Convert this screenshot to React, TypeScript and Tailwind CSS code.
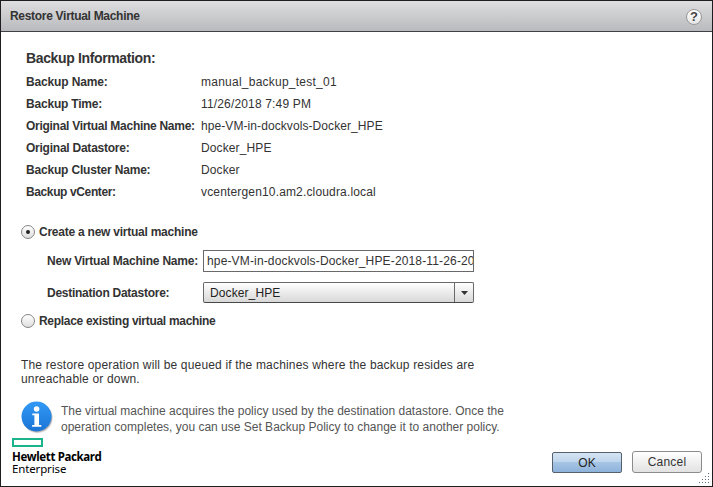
const details = [
  { label: "Backup Name:", value: "manual_backup_test_01", l: "tracking-[-0.15px]", v: "tracking-[0.24px]" },
  { label: "Backup Time:", value: "11/26/2018 7:49 PM", l: "tracking-[-0.2px]", v: "tracking-[0.16px]" },
  { label: "Original Virtual Machine Name:", value: "hpe-VM-in-dockvols-Docker_HPE", l: "tracking-[-0.28px]", v: "tracking-[0.08px]" },
  { label: "Original Datastore:", value: "Docker_HPE", l: "tracking-[-0.24px]", v: "tracking-[0.12px]" },
  { label: "Backup Cluster Name:", value: "Docker", l: "tracking-[-0.18px]", v: "tracking-[0.1px]" },
  { label: "Backup vCenter:", value: "vcentergen10.am2.cloudra.local", l: "tracking-[-0.38px]", v: "tracking-[0.16px]" },
];

function Radio({ checked }: { checked?: boolean }) {
  return (
    <span className="flex size-[14px] shrink-0 items-center justify-center rounded-full border border-[#858585] bg-linear-to-b from-white to-[#dedede]">
      {checked && <span className="size-[4px] rounded-full bg-[#222]" />}
    </span>
  );
}

function InfoIcon() {
  return (
    <svg width="34" height="34" viewBox="0 0 34 34" className="shrink-0">
      <defs>
        <linearGradient id="info" x1="0" y1="0" x2="0" y2="1">
          <stop offset="0" stopColor="#3299f6" />
          <stop offset="1" stopColor="#1a74d6" />
        </linearGradient>
      </defs>
      <circle cx="16.6" cy="17" r="15.2" fill="#000" opacity=".1" />
      <circle cx="16.2" cy="16.5" r="15" fill="#000" opacity=".22" />
      <circle cx="15.5" cy="15.5" r="15" fill="url(#info)" />
      <circle cx="15.6" cy="8" r="2.8" fill="#fff" />
      <path d="M11.3 12.5H18V24H20.3V25.8H11.1V24H13.4V14.3H11.3Z" fill="#fff" />
    </svg>
  );
}

function Grip() {
  const dots = [[9, 0], [6, 3], [9, 3], [3, 6], [6, 6], [9, 6], [0, 9], [3, 9], [6, 9], [9, 9]];
  return (
    <svg width="11" height="11" className="absolute right-[2px] bottom-[2px]">
      {dots.map(([x, y]) => (
        <rect key={`${x}-${y}`} x={x} y={y} width="1" height="1" fill="#5c6b7d" />
      ))}
    </svg>
  );
}

export default function App() {
  return (
    <div className="relative flex h-[487px] w-[713px] flex-col overflow-hidden border border-[#1f1d20] bg-white font-['Liberation_Sans',Arial,sans-serif] text-[12px] leading-[14px] whitespace-nowrap text-[#333]">
      <header className="flex h-[31px] shrink-0 items-center justify-between border-b border-[#3f4045] bg-linear-to-b from-[#dedee0] to-[#b9babd] pr-[10px] pl-[9px]">
        <h1 className="font-bold tracking-[-0.3px]">Restore Virtual Machine</h1>
        <span className="mt-px flex size-4 items-center justify-center rounded-full border border-[#999] bg-linear-to-b from-white to-[#e6e6e6] text-[13px] font-bold text-[#444]">?</span>
      </header>

      <section className="mt-[18px] pl-[25px]">
        <h2 className="text-[14px] leading-[16px] font-bold tracking-[-0.36px]">Backup Information:</h2>
        <dl className="mt-[5px]">
          {details.map((d) => (
            <div key={d.label} className="flex h-[22px] items-center">
              <dt className={`w-[175px] shrink-0 font-bold ${d.l}`}>{d.label}</dt>
              <dd className={d.v}>{d.value}</dd>
            </div>
          ))}
        </dl>
      </section>

      <section className="mt-[22px] pl-[20px]">
        <label className="flex h-[14px] items-center gap-1">
          <Radio checked />
          <span className="font-bold tracking-[-0.24px]">Create a new virtual machine</span>
        </label>
        <div className="mt-[11px] flex h-[22px] items-center pl-[26px]">
          <span className="w-[156px] shrink-0 font-bold tracking-[-0.22px]">New Virtual Machine Name:</span>
          <div className="flex h-[22px] w-[271px] items-center overflow-hidden border border-[#696969] pl-[3px] tracking-[0.15px]">
            hpe-VM-in-dockvols-Docker_HPE-2018-11-26-20
          </div>
        </div>
        <div className="mt-[10px] flex h-[21px] items-center pl-[26px]">
          <span className="w-[156px] shrink-0 font-bold tracking-[-0.26px]">Destination Datastore:</span>
          <div className="flex h-[21px] w-[271px] rounded-[2px] border border-[#696969] border-b-[#484848] bg-linear-to-b from-white to-[#d8d8d8]">
            <span className="flex-1 pt-[3px] pl-[6px] tracking-[0.1px] text-[#222]">Docker_HPE</span>
            <span className="flex w-[19px] items-center justify-center border-l border-[#696969]">
              <svg width="7" height="4"><path d="M0 0H7L3.5 4Z" fill="#333" /></svg>
            </span>
          </div>
        </div>
        <label className="mt-[11px] flex h-[14px] items-center gap-1">
          <Radio />
          <span className="font-bold tracking-[-0.3px]">Replace existing virtual machine</span>
        </label>
        <div className="mt-[30px]">
          <p className="tracking-[0.17px]">The restore operation will be queued if the machines where the backup resides are</p>
          <p className="tracking-[0.17px]">unreachable or down.</p>
        </div>
      </section>

      <section className="mt-[15px] flex h-[34px] pl-[20px] text-[#555]">
        <InfoIcon />
        <div className="mt-[2px] ml-[6px] leading-[16px]">
          <p className="tracking-[0px]">The virtual machine acquires the policy used by the destination datastore. Once the</p>
          <p className="tracking-[0px]">operation completes, you can use Set Backup Policy to change it to another policy.</p>
        </div>
      </section>

      <footer className="mt-[3px] flex justify-between pr-[10px] pl-[11px]">
        <div className="font-['Noto_Sans',sans-serif] text-black">
          <div className="h-[9px] w-[31px] border-2 border-[#1bb28c]" />
          <div className="mt-[4px] text-[11.5px] leading-[12px] font-bold tracking-[-0.36px]">Hewlett Packard</div>
          <div className="text-[11.5px] leading-[12px] tracking-[-0.14px]">Enterprise</div>
        </div>
        <div className="mt-[13px] flex gap-[10px]">
          <button className="mt-px flex h-[21px] w-[70px] items-center justify-center rounded-[2px] border border-[#56616d] bg-[linear-gradient(#d5e4f2,#bed5ec_48%,#a6c5e4_50%,#8db2da)] pt-px text-[#222]">OK</button>
          <button className="flex h-[22px] w-[70px] items-center justify-center rounded-[3px] border border-[#8b8b8b] bg-linear-to-b from-white to-[#e2e2e2] tracking-[0.2px] text-[#333]">Cancel</button>
        </div>
      </footer>
      <Grip />
    </div>
  );
}
